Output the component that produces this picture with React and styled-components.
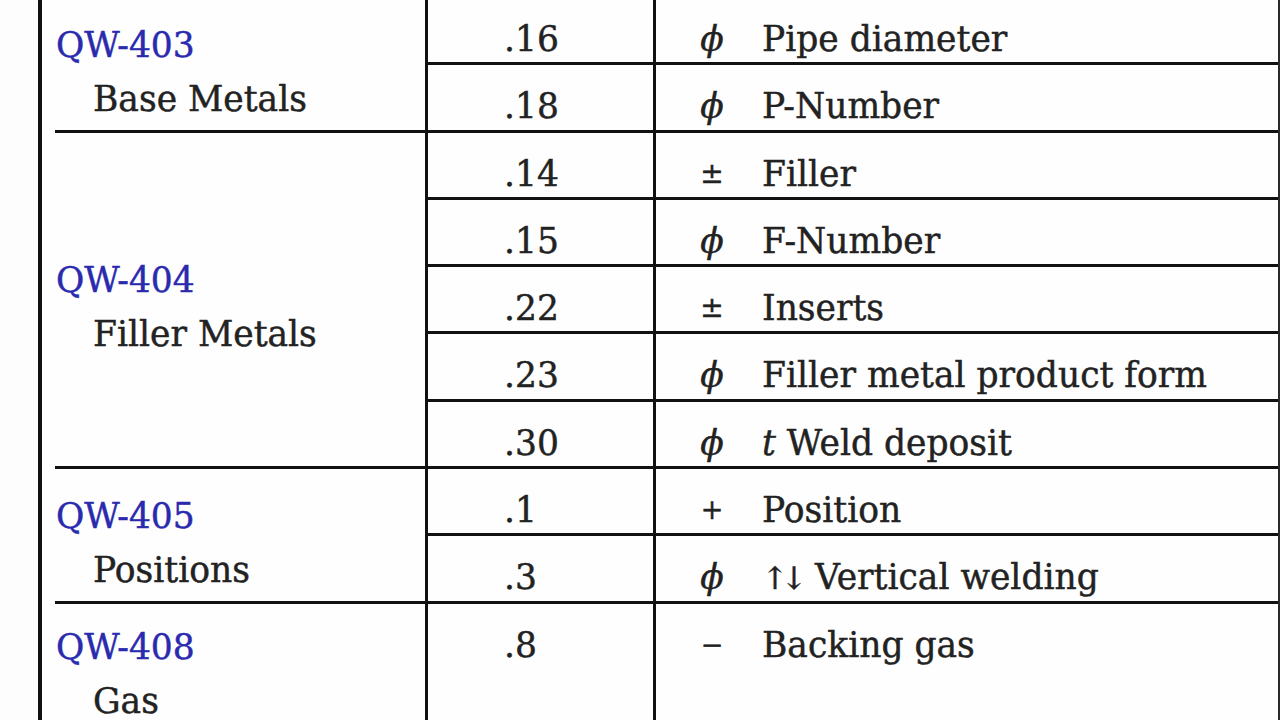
import React from 'react';
import styled, { createGlobalStyle } from 'styled-components';

const GlobalStyle = createGlobalStyle`
  html, body {
    margin: 0;
    padding: 0;
    background: #fdfdfd;
    overflow: hidden;
  }
`;

const Page = styled.div`
  width: 1280px;
  height: 720px;
  overflow: hidden;
  padding-left: 38px;
  box-sizing: border-box;
  font-family: "DejaVu Serif", "Liberation Serif", serif;
  font-size: 34.5px;
  color: #222;
  -webkit-text-stroke: 0.45px currentColor;
`;

const Table = styled.div`
  margin-top: -2px;
  border-left: 4px solid #111;
  border-right: 2px solid #2a2a2a;
  background: #fefefe;
`;

const Group = styled.div`
  display: grid;
  grid-template-columns: 370px 1fr;
  margin-left: 13px;
`;

const Label = styled.div`
  display: flex;
  flex-direction: column;
  justify-content: center;
  padding-top: 16px;
  line-height: 54px;
  border-bottom: 3px solid #111;
  box-sizing: border-box;
`;

const Code = styled.span`
  color: #2a2aae;
  padding-left: 1px;
`;

const Title = styled.span`
  padding-left: 38px;
  white-space: nowrap;
`;

const Rows = styled.div`
  border-left: 3px solid #111;
`;

const Row = styled.div`
  display: grid;
  grid-template-columns: 228px 106px 1fr;
  height: ${(p) => (p.$tall ? '120px' : '67.3px')};
  box-sizing: border-box;
  border-bottom: 3px solid #111;
  line-height: 40px;
`;

const Num = styled.div`
  border-right: 3px solid #111;
  padding: 21px 0 0 76px;
`;

const Sym = styled.div`
  text-align: center;
  padding: 21px 0 0 6px;
  font-size: ${(p) => p.$size || '34.5px'};
  font-style: ${(p) => (p.$italic ? 'italic' : 'normal')};
`;

const Desc = styled.div`
  padding-top: 21px;
  white-space: nowrap;
`;

const Arrows = styled.span`
  font-size: 31px;
  letter-spacing: -7px;
  margin-right: 15px;
`;

const symbols = {
  phi: { ch: '\u03D5', italic: true },
  pm: { ch: '\u00B1', size: '28px' },
  plus: { ch: '+', size: '27px' },
  minus: { ch: '\u2212', size: '27px' },
};

const groups = [
  {
    code: 'QW-403',
    title: 'Base Metals',
    rows: [
      { num: '.16', sym: 'phi', desc: 'Pipe diameter' },
      { num: '.18', sym: 'phi', desc: 'P-Number' },
    ],
  },
  {
    code: 'QW-404',
    title: 'Filler Metals',
    rows: [
      { num: '.14', sym: 'pm', desc: 'Filler' },
      { num: '.15', sym: 'phi', desc: 'F-Number' },
      { num: '.22', sym: 'pm', desc: 'Inserts' },
      { num: '.23', sym: 'phi', desc: 'Filler metal product form' },
      { num: '.30', sym: 'phi', desc: <><i>t</i> Weld deposit</> },
    ],
  },
  {
    code: 'QW-405',
    title: 'Positions',
    rows: [
      { num: '.1', sym: 'plus', desc: 'Position' },
      { num: '.3', sym: 'phi', desc: <><Arrows>{'\u2191\u2193'}</Arrows>Vertical welding</> },
    ],
  },
  {
    code: 'QW-408',
    title: 'Gas',
    rows: [{ num: '.8', sym: 'minus', desc: 'Backing gas', tall: true }],
  },
];

const App = () => (
  <>
    <GlobalStyle />
    <Page>
      <Table>
        {groups.map((g) => (
          <Group key={g.code}>
            <Label>
              <Code>{g.code}</Code>
              <Title>{g.title}</Title>
            </Label>
            <Rows>
              {g.rows.map((r) => {
                const s = symbols[r.sym];
                return (
                  <Row key={r.num} $tall={r.tall}>
                    <Num>{r.num}</Num>
                    <Sym $italic={s.italic} $size={s.size}>{s.ch}</Sym>
                    <Desc>{r.desc}</Desc>
                  </Row>
                );
              })}
            </Rows>
          </Group>
        ))}
      </Table>
    </Page>
  </>
);

export default App;
